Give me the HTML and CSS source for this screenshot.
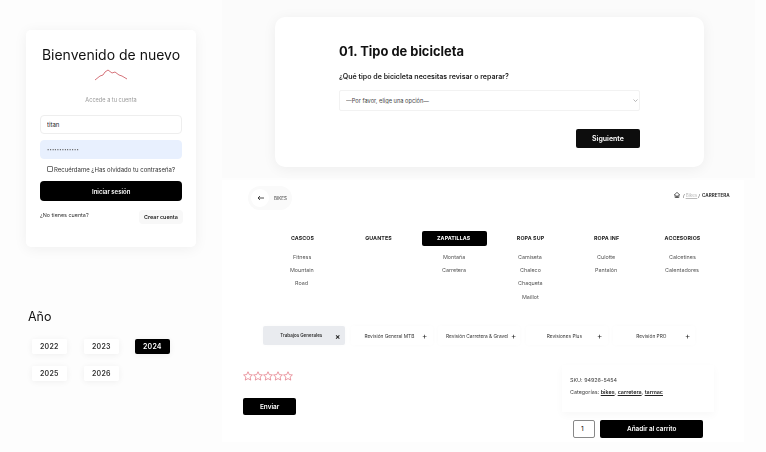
FILE: index.html
```html
<!DOCTYPE html>
<html>
  <head>
    <title>Bikes collage</title>
    <link rel="stylesheet" href="styles.css">
  </head>
  <body>
    <div class="canvas">
      <div class="panel login">
        <h1>Bienvenido de nuevo</h1>
        <svg class="logo" width="34" height="12" viewBox="0 0 34 12">
          <path d="M1 11 L6 7 L9 6 L11 3 L14 1 L18 4 L21 3 L25 6 L28 7 L33 10" fill="none" stroke="#d0636b" stroke-width="0.9"/>
        </svg>
        <p class="sub">Accede a tu cuenta</p>
        <input class="field" type="text" value="titan">
        <input class="field filled" type="text" value="•••••••••••••">
        <label class="remember"><input type="checkbox"> Recuérdame ¿Has olvidado tu contraseña?</label>
        <button class="btn login-btn"><span>Iniciar sesión</span></button>
        <div class="signup">
          <span>¿No tienes cuenta?</span>
          <button class="create">Crear cuenta</button>
        </div>
      </div>

      <div class="years">
        <h2>Año</h2>
        <div class="year-grid">
          <button class="year"><span>2022</span></button>
          <button class="year"><span>2023</span></button>
          <button class="year active"><span>2024</span></button>
          <button class="year"><span>2025</span></button>
          <button class="year"><span>2026</span></button>
        </div>
      </div>

      <div class="wizard-area">
        <div class="panel wizard">
          <h2>01. Tipo de bicicleta</h2>
          <p class="question">¿Qué tipo de bicicleta necesitas revisar o reparar?</p>
          <div class="choice-wrap">
            <select class="choice">
              <option>—Por favor, elige una opción—</option>
            </select>
            <svg class="chevron" width="5" height="3" viewBox="0 0 5 3"><path d="M0.5 0.5 L2.5 2.5 L4.5 0.5" fill="none" stroke="#999" stroke-width="0.7"/></svg>
          </div>
          <div class="wizard-foot">
            <button class="btn next"><span>Siguiente</span></button>
          </div>
        </div>
      </div>

      <div class="shop">
        <div class="shop-top">
          <div class="back">
            <span class="back-circle">
              <svg width="7" height="6" viewBox="0 0 7 6"><path d="M7 3 H1 M3 1 L1 3 L3 5" fill="none" stroke="#222" stroke-width="0.8"/></svg>
            </span>
            <span>BIKES</span>
          </div>
          <div class="crumbs">
            <svg width="6" height="6" viewBox="0 0 10 10"><path d="M5 0.5 L9.5 5 H8 V9.5 H2 V5 H0.5 Z M4 9.5 V6.5 H6 V9.5" fill="none" stroke="#333" stroke-width="1.3"/></svg>
            <span class="crumb-sep">/</span><span class="crumb-link">Bikes</span> / <b>CARRETERA</b>
          </div>
        </div>

        <div class="menu">
          <div class="menu-col"><h3>CASCOS</h3><span>Fitness</span><span>Mountain</span><span>Road</span></div>
          <div class="menu-col"><h3>GUANTES</h3></div>
          <div class="menu-col"><h3 class="current"><span>ZAPATILLAS</span></h3><span>Montaña</span><span>Carretera</span></div>
          <div class="menu-col"><h3>ROPA SUP</h3><span>Camiseta</span><span>Chaleco</span><span>Chaqueta</span><span>Maillot</span></div>
          <div class="menu-col"><h3>ROPA INF</h3><span>Culotte</span><span>Pantalón</span></div>
          <div class="menu-col"><h3>ACCESORIOS</h3><span>Calcetines</span><span>Calentadores</span></div>
        </div>

        <div class="tabs">
          <div class="tab open"><span>Trabajos Generales</span><i>×</i></div>
          <div class="tab"><span>Revisión General MTB</span><i>+</i></div>
          <div class="tab"><span>Revisión Carretera &amp; Gravel</span><i>+</i></div>
          <div class="tab"><span>Revisiones Plus</span><i>+</i></div>
          <div class="tab"><span>Revisión PRO</span><i>+</i></div>
        </div>

        <div class="bottom">
          <div class="review">
            <div class="stars">
              <svg width="10" height="10" viewBox="0 0 20 20"><path class="star" d="M10 1.5 L12.6 7.2 L18.8 7.9 L14.2 12.1 L15.5 18.2 L10 15.1 L4.5 18.2 L5.8 12.1 L1.2 7.9 L7.4 7.2 Z"/></svg>
              <svg width="10" height="10" viewBox="0 0 20 20"><path class="star" d="M10 1.5 L12.6 7.2 L18.8 7.9 L14.2 12.1 L15.5 18.2 L10 15.1 L4.5 18.2 L5.8 12.1 L1.2 7.9 L7.4 7.2 Z"/></svg>
              <svg width="10" height="10" viewBox="0 0 20 20"><path class="star" d="M10 1.5 L12.6 7.2 L18.8 7.9 L14.2 12.1 L15.5 18.2 L10 15.1 L4.5 18.2 L5.8 12.1 L1.2 7.9 L7.4 7.2 Z"/></svg>
              <svg width="10" height="10" viewBox="0 0 20 20"><path class="star" d="M10 1.5 L12.6 7.2 L18.8 7.9 L14.2 12.1 L15.5 18.2 L10 15.1 L4.5 18.2 L5.8 12.1 L1.2 7.9 L7.4 7.2 Z"/></svg>
              <svg width="10" height="10" viewBox="0 0 20 20"><path class="star" d="M10 1.5 L12.6 7.2 L18.8 7.9 L14.2 12.1 L15.5 18.2 L10 15.1 L4.5 18.2 L5.8 12.1 L1.2 7.9 L7.4 7.2 Z"/></svg>
            </div>
            <button class="btn send"><span>Enviar</span></button>
          </div>
          <div class="buy">
            <div class="meta">
              <p>SKU: 94926-5454</p>
              <p>Categorías: <u>bikes</u>, <u>carretera</u>, <u>tarmac</u></p>
            </div>
            <div class="cart">
              <input class="qty" type="text" value="1">
              <button class="btn add"><span>Añadir al carrito</span></button>
            </div>
          </div>
        </div>
      </div>
    </div>
  </body>
</html>
```

FILE: styles.css
```css
* {
  box-sizing: border-box;
}

body {
  margin: 0;
  background-color: #fdfdfd;
  font-family: Inter, sans-serif;
  color: #111;
}

.canvas {
  position: relative;
  width: 766px;
  height: 452px;
  overflow: hidden;
  filter: blur(0.35px);
}

.panel {
  background-color: white;
  box-shadow: 0 2px 14px rgba(0, 0, 0, 0.06);
}

.btn {
  display: block;
  border: 0;
  border-radius: 2px;
  background-color: black;
  color: white;
  font-family: Inter, sans-serif;
  font-weight: 600;
  padding: 0;
}

/* own layers, so small text stays greyscale */
.btn span,
.year span,
.current span,
.login h1,
.sub,
.remember,
.signup span,
.years h2,
.wizard h2,
.question,
.back > span:last-child,
.crumbs,
.menu-col h3:not(.current),
.menu-col > span,
.tab span,
.tab i,
.meta p {
  will-change: transform;
}

.btn span,
.year span,
.current span {
  display: inline-block;
}

/* login */
.login {
  position: absolute;
  left: 26px;
  top: 30px;
  width: 170px;
  height: 217px;
  border-radius: 5px;
  padding: 15px 14px 0;
  display: flex;
  flex-direction: column;
}

.login h1 {
  margin: 0;
  font-size: 14px;
  font-weight: 400;
  line-height: 19px;
  text-align: center;
  white-space: nowrap;
}

.logo {
  display: block;
  margin: 5px auto 0;
}

.sub {
  margin: 15px 0 0;
  font-size: 5.6px;
  line-height: 8px;
  text-align: center;
  color: #999;
}

.field {
  display: block;
  width: 142px;
  height: 19px;
  margin-top: 6px;
  border: 1px solid #eee;
  border-radius: 4px;
  padding: 0 6px;
  font-family: Inter, sans-serif;
  font-size: 6px;
  color: #222;
  background-color: white;
}

.sub + .field {
  margin-top: 11px;
}

.field.filled {
  background-color: #e8f0fe;
  border-color: #e8f0fe;
  font-size: 4px;
  letter-spacing: 0.2px;
  color: #555;
}

.remember {
  display: flex;
  align-items: center;
  justify-content: center;
  gap: 1px;
  margin-top: 5px;
  height: 10px;
  font-size: 6px;
  color: #333;
  white-space: nowrap;
}

.remember input {
  appearance: none;
  width: 6px;
  height: 6px;
  margin: 0;
  border: 0.6px solid #777;
  border-radius: 1px;
  background-color: white;
}

.login-btn {
  width: 142px;
  height: 20px;
  margin-top: 7px;
  border-radius: 4px;
  font-size: 6px;
}

.signup {
  display: flex;
  justify-content: space-between;
  align-items: flex-start;
  margin-top: 9px;
  font-size: 5.4px;
  color: #333;
}

.signup span {
  margin-top: 2px;
}

.create {
  width: 44px;
  height: 14px;
  margin-right: -1px;
  border: 0;
  border-radius: 4px;
  background-color: #f8f8f8;
  font-family: Inter, sans-serif;
  font-size: 5.4px;
  font-weight: 600;
  color: #222;
  padding: 0;
}

/* year filter */
.years {
  position: absolute;
  left: 28px;
  top: 309px;
}

.years h2 {
  margin: 0 0 14px;
  font-size: 12.5px;
  font-weight: 400;
  line-height: 16px;
}

.year-grid {
  display: grid;
  grid-template-columns: repeat(3, 35px);
  grid-auto-rows: 15px;
  column-gap: 16.5px;
  row-gap: 12px;
  margin-left: 4px;
}

.year {
  border: 0;
  border-radius: 2px;
  background-color: white;
  box-shadow: 0 1px 6px rgba(0, 0, 0, 0.06);
  font-family: Inter, sans-serif;
  font-size: 7px;
  font-weight: 600;
  letter-spacing: 0.2px;
  color: #333;
  padding: 0;
}

.year.active {
  background-color: black;
  color: white;
}

/* wizard */
.wizard-area {
  position: absolute;
  left: 222px;
  top: 0;
  width: 533px;
  height: 178px;
  padding: 17px 0 0 53px;
  background-color: #fbfbfb;
}

.wizard {
  width: 429px;
  height: 150px;
  border-radius: 10px;
  padding: 26px 64px 0;
}

.wizard h2 {
  margin: 0;
  font-size: 12.9px;
  font-weight: 700;
  line-height: 18px;
}

.question {
  margin: 11px 0 0;
  font-size: 7.05px;
  font-weight: 600;
  line-height: 10px;
  color: #222;
}

.choice-wrap {
  position: relative;
  width: 301px;
  margin-top: 8px;
}

.choice {
  display: block;
  width: 301px;
  height: 21px;
  border: 1px solid #f2f2f2;
  border-radius: 2px;
  background-color: white;
  padding: 0 6px;
  font-family: Inter, sans-serif;
  font-size: 5.7px;
  color: #444;
  appearance: none;
}

.chevron {
  position: absolute;
  right: 2px;
  top: 9px;
}

.wizard-foot {
  display: flex;
  justify-content: flex-end;
  margin-top: 18px;
}

.next {
  width: 64px;
  height: 19px;
  border-radius: 2px;
  background-color: #0d0d0d;
  font-size: 7px;
}

/* shop */
.shop {
  position: absolute;
  left: 222px;
  top: 180px;
  width: 522px;
  height: 262px;
  background-color: white;
  padding-top: 6px;
}

.shop-top {
  display: flex;
  justify-content: space-between;
  align-items: flex-start;
  padding: 0 14px 0 26px;
}

.back {
  display: flex;
  align-items: center;
  gap: 5px;
  width: 44px;
  height: 24px;
  border-radius: 12px;
  background-color: #fafafa;
  padding-left: 3px;
  font-size: 4.5px;
  color: #444;
}

.back-circle {
  display: flex;
  align-items: center;
  justify-content: center;
  width: 18px;
  height: 18px;
  border-radius: 50%;
  background-color: white;
}

.crumbs {
  display: flex;
  align-items: center;
  gap: 1px;
  margin-top: 6px;
  font-size: 4.6px;
  color: #333;
}

.crumb-sep {
  margin-left: 2px;
}

.crumb-link {
  color: #bbb;
  text-decoration: underline;
}

.crumbs b {
  font-weight: 700;
  margin-left: 1px;
}

.menu {
  display: grid;
  grid-template-columns: repeat(6, 76px);
  margin: 21px 0 0 42px;
  height: 70px;
}

.menu-col {
  display: flex;
  flex-direction: column;
  align-items: center;
}

.menu-col h3 {
  margin: 0 0 5px;
  width: 65px;
  height: 15px;
  border-radius: 2px;
  font-size: 5.3px;
  font-weight: 700;
  letter-spacing: 0.1px;
  line-height: 15px;
  text-align: center;
  color: #222;
}

.menu-col h3.current {
  background-color: black;
  color: white;
}

.menu-col > span {
  height: 13.2px;
  font-size: 5.4px;
  line-height: 13px;
  color: #555;
}

.tabs {
  display: flex;
  gap: 5.5px;
  margin: 25px 0 0 41px;
}

.tab {
  display: flex;
  align-items: center;
  width: 82px;
  height: 19px;
  border-radius: 2px;
  background-color: white;
  padding: 0 5px 0 8px;
  box-shadow: 0 0 5px rgba(0, 0, 0, 0.02);
  font-size: 4.8px;
  color: #333;
  white-space: nowrap;
}

.tab span {
  flex: 1;
  text-align: center;
}

.tab i {
  margin-left: 3px;
  font-style: normal;
  font-size: 8px;
  color: #222;
}

.tab.open {
  background-color: #e9ebef;
  font-size: 4.5px;
  font-weight: 600;
}

.bottom {
  display: flex;
  justify-content: space-between;
  margin-top: 20px;
  padding: 0 30px 0 21px;
}

.review {
  padding-top: 6px;
}

.stars {
  display: flex;
  height: 10px;
}

.star {
  fill: none;
  stroke: #e2707c;
  stroke-width: 1.4;
}

.send {
  width: 53px;
  height: 17px;
  margin-top: 17px;
  font-size: 6.4px;
}

.meta {
  width: 152px;
  height: 47px;
  padding: 12px 8px 0;
  background-color: white;
  box-shadow: 0 3px 8px rgba(0, 0, 0, 0.03);
  font-size: 5.4px;
  color: #444;
}

.meta p {
  margin: 0 0 6px;
  line-height: 6px;
}

.meta u {
  font-weight: 600;
  color: #222;
}

.cart {
  display: flex;
  gap: 5px;
  margin: 8px 0 0 11px;
}

.qty {
  width: 22px;
  height: 18px;
  border: 1px solid #888;
  border-radius: 2px;
  padding: 0 0 0 7px;
  font-family: Inter, sans-serif;
  font-size: 6.5px;
}

.add {
  width: 103px;
  height: 18px;
  font-size: 6.4px;
}
```
